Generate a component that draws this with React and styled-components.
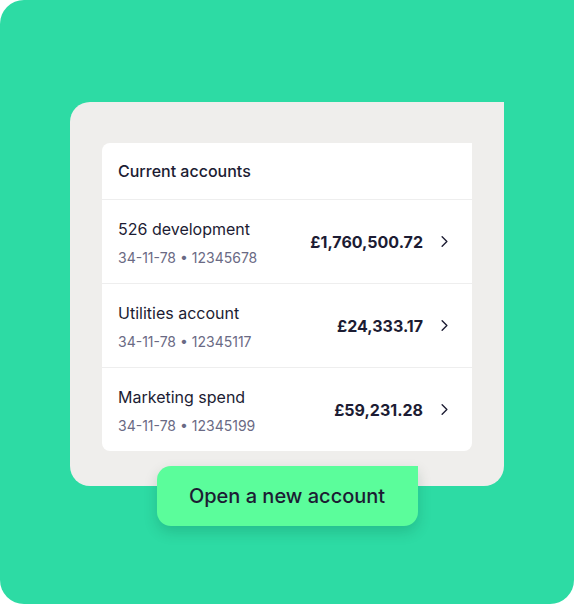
import styled, { createGlobalStyle } from 'styled-components'
import { ChevronRight } from 'lucide-react'

const GlobalStyle = createGlobalStyle`
  html, body {
    margin: 0;
    padding: 0;
    background: #ffffff;
  }
  body {
    font-family: Inter, "Noto Sans", sans-serif;
    -webkit-font-smoothing: antialiased;
  }
`

const Stage = styled.div`
  width: 574px;
  height: 604px;
  box-sizing: border-box;
  background: #2ddba4;
  border-radius: 24px 0 24px 24px;
  padding-top: 102px;
  display: flex;
  flex-direction: column;
  align-items: center;
`

const Panel = styled.div`
  width: 434px;
  height: 384px;
  box-sizing: border-box;
  background: #efeeec;
  border-radius: 20px 0 20px 20px;
  padding: 41px 32px 34px;
`

const Card = styled.div`
  background: #ffffff;
  border-radius: 8px 0 8px 8px;
  overflow: hidden;
`

const CardHeader = styled.div`
  height: 57px;
  box-sizing: border-box;
  display: flex;
  align-items: center;
  padding: 0 16px;
  font-size: 16px;
  font-weight: 500;
  color: #1c1c33;
  border-bottom: 1px solid #eeeeee;
`

const Row = styled.div`
  height: ${({ $last }) => ($last ? '83px' : '84px')};
  box-sizing: border-box;
  display: flex;
  align-items: center;
  padding: 0 20px 0 16px;
  border-bottom: ${({ $last }) => ($last ? 'none' : '1px solid #eeeeee')};
`

const Info = styled.div`
  flex: 1;
  display: flex;
  flex-direction: column;
  gap: 10px;
  padding-top: 2px;
`

const Name = styled.div`
  font-size: 16px;
  color: #1c1c33;
`

const Sort = styled.div`
  font-size: 14px;
  color: #6a6a84;
`

const Amount = styled.div`
  font-size: 16px;
  font-weight: 700;
  color: #1c1c33;
  margin-right: 12px;
`

const Chevron = styled(ChevronRight)`
  color: #1c1c33;
  margin-right: -2px;
`

const OpenButton = styled.button`
  margin-top: -20px;
  width: 261px;
  height: 60px;
  border: none;
  border-radius: 14px 0 14px 14px;
  background: #5bfd9b;
  box-shadow: 0 6px 14px rgba(0, 60, 40, 0.18);
  font-family: Inter, "Noto Sans", sans-serif;
  font-size: 20px;
  font-weight: 500;
  color: #1c1c33;
  cursor: pointer;
`

const accounts = [
  { name: '526 development', number: '12345678', amount: '£1,760,500.72' },
  { name: 'Utilities account', number: '12345117', amount: '£24,333.17' },
  { name: 'Marketing spend', number: '12345199', amount: '£59,231.28' },
]

const App = () => {
  return (
    <>
      <GlobalStyle />
      <Stage>
        <Panel>
          <Card>
            <CardHeader>Current accounts</CardHeader>
            {accounts.map(({ name, number, amount }, i) => (
              <Row key={name} $last={i === accounts.length - 1}>
                <Info>
                  <Name>{name}</Name>
                  <Sort>34-11-78 • {number}</Sort>
                </Info>
                <Amount>{amount}</Amount>
                <Chevron size={19} strokeWidth={1.75} />
              </Row>
            ))}
          </Card>
        </Panel>
        <OpenButton>Open a new account</OpenButton>
      </Stage>
    </>
  )
}

export default App
